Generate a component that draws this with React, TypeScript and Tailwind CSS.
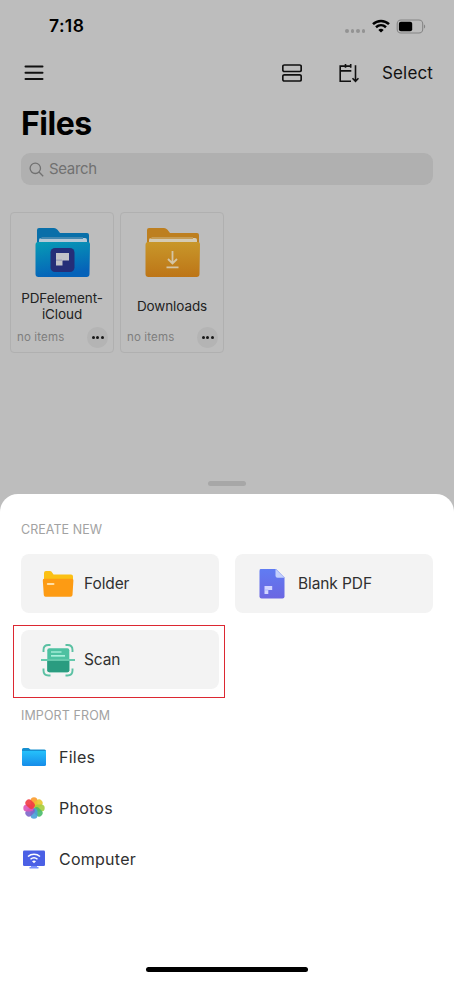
import type { ReactNode } from 'react'

function StatusBar() {
  return (
    <div className="flex h-[52px] items-center justify-between pl-[49px] pr-7">
      <span className="text-[17.500px] font-semibold leading-5 tracking-[0.400px] text-black">7:18</span>
      <div className="flex items-center">
        <div className="mr-[7px] mt-[9px] flex gap-[2px]">
          {[1, 2, 3, 4].map((dot) => (
            <span key={dot} className="h-[4px] w-[3.500px] rounded-full bg-[#939393]" />
          ))}
        </div>
        <svg className="mr-[6px] h-[14px] w-[18px]" viewBox="0 0 18 14" fill="none" stroke="#000" strokeWidth="2.500">
          <path d="M1 5.100C5.500.8 12.500.8 17 5.100" />
          <path d="M4 8.200C7 5.500 11 5.500 14 8.200" />
          <path d="M9 13.600L6.300 10.900C7.900 9.500 10.100 9.500 11.700 10.900Z" fill="#000" stroke="none" />
        </svg>
        <svg className="h-[15px] w-[30px]" viewBox="0 0 30 15" fill="none">
          <rect x="1.200" y="1" width="25.500" height="13" rx="3.800" stroke="#858585" strokeWidth="1.100" />
          <rect x="2.900" y="2.700" width="13.300" height="9.600" rx="2" fill="#000" />
          <path d="M28 5.500C29.600 6.200 29.600 8.800 28 9.500Z" fill="#858585" />
        </svg>
      </div>
    </div>
  )
}

function Toolbar() {
  return (
    <div className="flex h-[42px] items-center pl-6 pr-[21px]">
      <svg className="h-4 w-5" viewBox="0 0 20 16" stroke="#111" strokeWidth="2" strokeLinecap="round">
        <path d="M1.500 1.500H18.500M1.500 7.700H18.500M1.500 14H18.500" />
      </svg>
      <svg className="ml-auto mr-[37px] h-[18px] w-5" viewBox="0 0 20 18" fill="none" stroke="#111" strokeWidth="1.700">
        <rect x=".8" y="1" width="18.400" height="6.500" rx="1.500" />
        <rect x=".8" y="10.800" width="18.400" height="6.200" rx="1.500" />
      </svg>
      <svg className="-mt-px mr-[23px] h-5 w-5" viewBox="0 0 20 20" fill="none" stroke="#111" strokeWidth="1.600">
        <path d="M12.300 3.100H1.200V18.300H12M1.200 7.900H12.300M6.500 1V4.800M11.700 1V4.800" />
        <path d="M16.500 2.200V18M13.500 15.200L16.500 18.300L19.500 15.200" />
      </svg>
      <span className="w-[51px] text-[17px] leading-5 tracking-[0.150px] text-[#111]">Select</span>
    </div>
  )
}

function CloudFolderIcon() {
  return (
    <svg className="h-[50px] w-14" viewBox="0 0 56 50">
      <defs>
        <linearGradient id="cloudFront" x1="0" y1="0" x2=".3" y2="1">
          <stop stopColor="#079cb5" />
          <stop offset="1" stopColor="#0562b9" />
        </linearGradient>
      </defs>
      <path d="M2 3Q2 1 4 1H19Q21 1 22.500 2.700L25 6H52Q54 6 54 8V25H2Z" fill="#096fa9" />
      <path d="M6 11H50Q52 11 52 13V17H4V13Q4 11 6 11Z" fill="#b4c9d7" />
      <path d="M5 12H48V10H7Z" fill="#4388b1" />
      <path d="M3 15H53Q55 15 55 17L54.500 47Q54.500 50 51.500 50H3.500Q.5 50 .5 47V18Q.5 15 3 15Z" fill="url(#cloudFront)" />
      <rect x="15.500" y="21" width="24" height="24" rx="4.500" fill="#252e78" />
      <path d="M21 26H34V33.500H27.500V38.500H21Z" fill="#c2c2c8" />
      <path d="M21 32.700H27V33.500H21Z" fill="#858ab0" />
    </svg>
  )
}

function DownloadFolderIcon() {
  return (
    <svg className="h-[50px] w-14" viewBox="0 0 56 50">
      <defs>
        <linearGradient id="downloadFront" x1="0" y1="0" x2="0" y2="1">
          <stop stopColor="#c8972a" />
          <stop offset="1" stopColor="#bd7517" />
        </linearGradient>
      </defs>
      <path d="M2 3Q2 1 4 1H19Q21 1 22.500 2.700L25 6H52Q54 6 54 8V25H2Z" fill="#bd7f20" />
      <path d="M6 11H50Q52 11 52 13V17H4V13Q4 11 6 11Z" fill="#d4cbb5" />
      <path d="M5 12H48V10H7Z" fill="#c69c55" />
      <path d="M3 15H53Q55 15 55 17L54.500 47Q54.500 50 51.500 50H3.500Q.5 50 .5 47V18Q.5 15 3 15Z" fill="url(#downloadFront)" />
      <path d="M27.500 24V36M23 32L27.500 36.500L32 32M21.500 40.300H33.500" fill="none" stroke="#d5c5a5" strokeWidth="1.800" />
    </svg>
  )
}

interface FileCardProps {
  icon: ReactNode
  name: ReactNode
}

function FileCard({ icon, name }: FileCardProps) {
  return (
    <div className="flex h-[141px] w-[104px] flex-col rounded-[4px] border border-[#b0b0b0] pt-[14px]">
      <div className="flex justify-center pl-px">{icon}</div>
      <div className="mt-[14px] flex h-8 items-center justify-center text-center text-[13.500px] leading-[15.500px] tracking-[-0.100px] text-[#222]">
        {name}
      </div>
      <div className="mt-1 flex items-center justify-between pl-[6px] pr-[5px]">
        <span className="text-[11.500px] leading-4 tracking-[0.150px] text-[#7e7e7e]">no items</span>
        <span className="flex h-[21px] w-[21px] items-center justify-center gap-[1.500px] rounded-full bg-[#b4b4b4]">
          <span className="h-[3px] w-[3px] rounded-full bg-[#181818]" />
          <span className="h-[3px] w-[3px] rounded-full bg-[#181818]" />
          <span className="h-[3px] w-[3px] rounded-full bg-[#181818]" />
        </span>
      </div>
    </div>
  )
}

function FolderIcon() {
  return (
    <svg className="h-8 w-8" viewBox="0 0 32 32">
      <path d="M2 5Q2 3 4 3H8Q9.500 3 10.500 5L11.500 6.500H29Q31 6.500 31 8.500V16H2Z" fill="#fbc014" />
      <path d="M2 10.800H30Q31.500 10.800 31.400 12.500L30.500 27Q30.400 28.700 28.500 28.700H3.500Q2 28.700 1.800 27L.8 12.500Q.7 10.800 2 10.800Z" fill="#fd9b13" />
      <path d="M5.800 15.900H11.500" stroke="#ffdfa5" strokeWidth="2" strokeLinecap="round" />
    </svg>
  )
}

function BlankPdfIcon() {
  return (
    <svg className="-ml-[3px] h-8 w-8" viewBox="0 0 32 32">
      <defs>
        <linearGradient id="pdfPage" x1="0" y1="0" x2="0" y2="1">
          <stop stopColor="#607cf3" />
          <stop offset="1" stopColor="#6b66e1" />
        </linearGradient>
      </defs>
      <path d="M5.500 1H21L29.500 9.500V28.500Q29.500 30.500 27.500 30.500H6.500Q4.500 30.500 4.500 28.500V3Q4.500 1 5.500 1Z" fill="url(#pdfPage)" />
      <path d="M20.500 1L29.500 9.700H22.500Q20.500 9.700 20.500 7.700Z" fill="#c4d0fc" />
      <path d="M9.500 18H17.200V22H13.300V26H9.500Z" fill="#d1d4ff" />
      <path d="M9.500 22H13.300" stroke="#9eabf5" strokeWidth=".6" />
    </svg>
  )
}

function ScanIcon() {
  return (
    <svg className="h-[34px] w-[34px]" viewBox="0 0 34 34">
      <path d="M2.500 9V7Q2.500 2 7.500 2H9.500M24.500 2H26.500Q31.500 2 31.500 7V9M31.500 25.500V27.500Q31.500 32.500 26.500 32.500H24.500M9.500 32.500H7.500Q2.500 32.500 2.500 27.500V25.500" fill="none" stroke="#5bc1a3" strokeWidth="1.900" />
      <rect x="6.300" y="5.200" width="22" height="24" rx="2" fill="#4dc1a1" />
      <path d="M6.300 17H28.300V27.200Q28.300 29.200 26.300 29.200H8.300Q6.300 29.200 6.300 27.200Z" fill="#2a9c80" />
      <path d="M0 16H34V18H0Z" fill="#65c9ac" />
      <path d="M10 9H20.500M10 12.800H24" stroke="#c9ffef" strokeWidth="1.200" />
    </svg>
  )
}

function FilesIcon() {
  return (
    <svg className="h-6 w-6" viewBox="0 0 24 24">
      <defs>
        <linearGradient id="filesFront" x1="0" y1="0" x2="0" y2="1">
          <stop stopColor="#25c1fb" />
          <stop offset="1" stopColor="#168ce9" />
        </linearGradient>
      </defs>
      <path d="M0 4.500Q0 3 1.500 3H6.500L8.500 4.500H22.500Q24 4.500 24 6V12H0Z" fill="#168fd0" />
      <path d="M0 6H24V19.500Q24 21 22.500 21H1.500Q0 21 0 19.500Z" fill="url(#filesFront)" />
    </svg>
  )
}

const petals = [
  { angle: 0, color: '#fb9b2b' },
  { angle: 45, color: '#e8c62d' },
  { angle: 90, color: '#a6cd3d' },
  { angle: 135, color: '#48ba69' },
  { angle: 180, color: '#49a1d9' },
  { angle: 225, color: '#7d65c9' },
  { angle: 270, color: '#dc55b7' },
  { angle: 315, color: '#f13b43' },
]

function PhotosIcon() {
  return (
    <svg className="h-6 w-6" viewBox="0 0 24 24">
      {petals.map(({ angle, color }) => (
        <rect key={angle} x="8.500" y="1.300" width="7" height="10.400" rx="3.500" fill={color} fillOpacity=".9" transform={`rotate(${angle} 12 12)`} />
      ))}
    </svg>
  )
}

function ComputerIcon() {
  return (
    <svg className="h-6 w-6" viewBox="0 0 24 24">
      <path d="M9 18H15V20H16.500V21.500H7.500V20H9Z" fill="#7990fb" />
      <rect x="1" y="3.500" width="22" height="15.500" rx="1.300" fill="#4b60e5" />
      <path d="M6 9.500C9.300 6.600 14.700 6.600 18 9.500M8.500 12.200C10.500 10.500 13.500 10.500 15.500 12.200" fill="none" stroke="#fff" strokeWidth="1.500" />
      <path d="M12 16.200L10 14.200Q12 12.700 14 14.200Z" fill="#fff" />
    </svg>
  )
}

interface ActionProps {
  icon: ReactNode
  label: string
}

function CreateButton({ icon, label }: ActionProps) {
  return (
    <button className="flex h-[59px] w-[198px] items-center rounded-[8px] bg-[#f3f3f3] pl-[20px] text-[15.500px] tracking-[-0.100px] text-[#303030]">
      <span className="flex w-[34px] justify-center">{icon}</span>
      <span className="ml-[9px]">{label}</span>
    </button>
  )
}

const importSources = [
  { icon: <FilesIcon />, label: 'Files' },
  { icon: <PhotosIcon />, label: 'Photos' },
  { icon: <ComputerIcon />, label: 'Computer' },
]

export default function App() {
  return (
    <div className="flex h-[981px] w-[454px] flex-col overflow-hidden bg-[#bdbdbd] font-['Inter',sans-serif]">
      <div className="flex h-[494px] shrink-0 flex-col">
        <StatusBar />
        <Toolbar />
        <h1 className="mt-[10px] pl-[21px] text-[32px] font-bold leading-10 tracking-[-0.500px] text-black">Files</h1>
        <div className="mx-[21px] mt-[9px] flex h-8 items-center rounded-[9px] bg-[#b0b0b0] pl-2 text-[#717171]">
          <svg className="mr-[5px] h-[15px] w-[15px]" viewBox="0 0 15 15" fill="none" stroke="currentColor" strokeWidth="1.300">
            <circle cx="6.300" cy="6.300" r="5.200" />
            <path d="M10 10L14.200 14.200" />
          </svg>
          <span className="text-[15px] leading-5 tracking-[-0.350px]">Search</span>
        </div>
        <div className="mt-[26.500px] flex gap-[6px] pl-[10px]">
          <FileCard icon={<CloudFolderIcon />} name={<span>PDFelement-<br />iCloud</span>} />
          <FileCard icon={<DownloadFolderIcon />} name="Downloads" />
        </div>
        <div className="mx-auto mb-2 mt-auto h-[5px] w-[38px] rounded-full bg-[#a7a7a7]" />
      </div>

      {/* Bottom sheet */}
      <div className="flex h-[487px] shrink-0 flex-col rounded-t-[18px] bg-white pt-[27px]">
        <h2 className="pl-[21px] pt-px text-[12.500px] leading-4 tracking-[0.050px] text-[#a2a2a2]">CREATE NEW</h2>
        <div className="mt-4 flex gap-4 px-[21px]">
          <CreateButton icon={<FolderIcon />} label="Folder" />
          <CreateButton icon={<BlankPdfIcon />} label="Blank PDF" />
        </div>
        <div className="ml-[13px] mt-3 h-[73px] w-[212px] bg-[#dc2832] p-px">
          <div className="h-full bg-white pl-[7px] pt-1">
            <CreateButton icon={<ScanIcon />} label="Scan" />
          </div>
        </div>
        <h2 className="mt-[10px] pl-[21px] text-[12.500px] leading-4 tracking-[0.100px] text-[#a2a2a2]">IMPORT FROM</h2>
        <div className="mt-[7px]">
          {importSources.map((source) => (
            <div key={source.label} className="flex h-[51px] items-center pl-[22px] text-[16px] tracking-[0.250px] text-[#303030]">
              {source.icon}
              <span className="ml-[13px]">{source.label}</span>
            </div>
          ))}
        </div>
        <div className="mx-auto mb-[9px] mt-auto h-[5px] w-[162px] rounded-full bg-black" />
      </div>
    </div>
  )
}
